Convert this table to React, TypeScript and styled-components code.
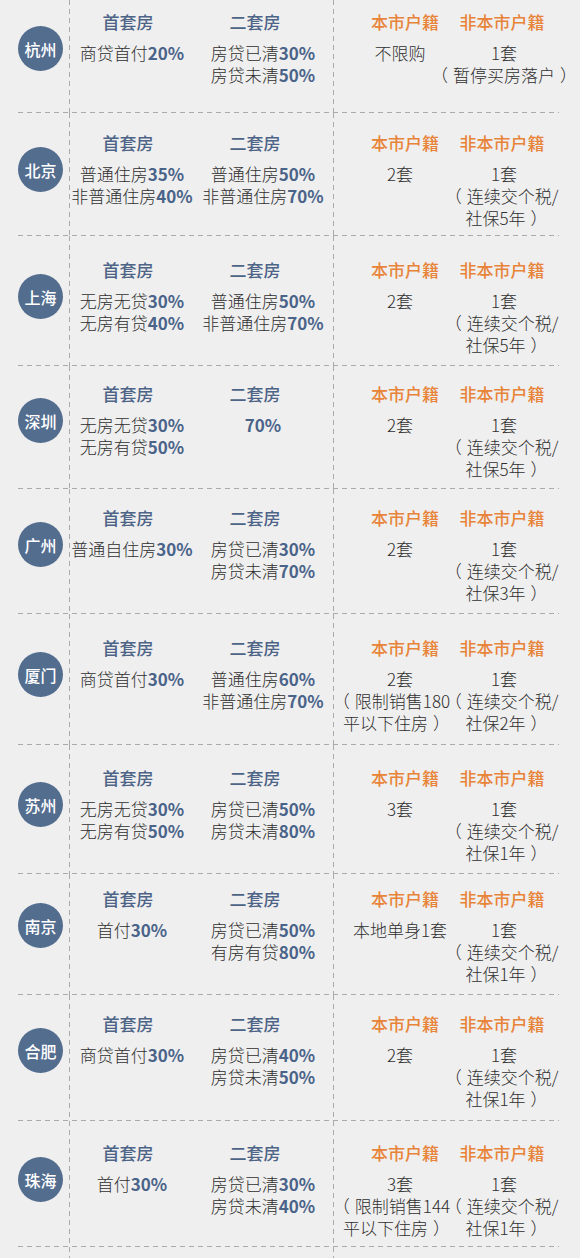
import React from "react";
import styled, { createGlobalStyle } from "styled-components";

const GlobalStyle = createGlobalStyle`
  html, body { margin: 0; padding: 0; background: #efefef; }
  body { font-family: "Noto Sans CJK SC", "Noto Sans", sans-serif; }
`;

const DASH = "#ababab";

type Seg = { t: string; n?: string };
type RowData = {
  city: string;
  h: number;
  top: number;
  c1: Seg[];
  c2: Seg[];
  c3: string[];
  c4: string[];
  noteDx?: number;
};

const rows: RowData[] = [
  { city: "杭州", h: 113, top: 22, c1: [{ t: "商贷首付", n: "20%" }], c2: [{ t: "房贷已清", n: "30%" }, { t: "房贷未清", n: "50%" }], c3: ["不限购"], c4: ["1套", "（暂停买房落户）"] },
  { city: "北京", h: 123, top: 30, c1: [{ t: "普通住房", n: "35%" }, { t: "非普通住房", n: "40%" }], c2: [{ t: "普通住房", n: "50%" }, { t: "非普通住房", n: "70%" }], c3: ["2套"], c4: ["1套", "（连续交个税/", "社保5年）"] },
  { city: "上海", h: 130, top: 34, c1: [{ t: "无房无贷", n: "30%" }, { t: "无房有贷", n: "40%" }], c2: [{ t: "普通住房", n: "50%" }, { t: "非普通住房", n: "70%" }], c3: ["2套"], c4: ["1套", "（连续交个税/", "社保5年）"] },
  { city: "深圳", h: 123, top: 28, c1: [{ t: "无房无贷", n: "30%" }, { t: "无房有贷", n: "50%" }], c2: [{ t: "", n: "70%" }], c3: ["2套"], c4: ["1套", "（连续交个税/", "社保5年）"] },
  { city: "广州", h: 125, top: 29, c1: [{ t: "普通自住房", n: "30%" }], c2: [{ t: "房贷已清", n: "30%" }, { t: "房贷未清", n: "70%" }], c3: ["2套"], c4: ["1套", "（连续交个税/", "社保3年）"] },
  { city: "厦门", h: 131, top: 34, c1: [{ t: "商贷首付", n: "30%" }], c2: [{ t: "普通住房", n: "60%" }, { t: "非普通住房", n: "70%" }], c3: ["2套", "（限制销售180", "平以下住房）"], c4: ["1套", "（连续交个税/", "社保2年）"], noteDx: -6 },
  { city: "苏州", h: 129, top: 33, c1: [{ t: "无房无贷", n: "30%" }, { t: "无房有贷", n: "50%" }], c2: [{ t: "房贷已清", n: "50%" }, { t: "房贷未清", n: "80%" }], c3: ["3套"], c4: ["1套", "（连续交个税/", "社保1年）"] },
  { city: "南京", h: 121, top: 25, c1: [{ t: "首付", n: "30%" }], c2: [{ t: "房贷已清", n: "50%" }, { t: "有房有贷", n: "80%" }], c3: ["本地单身1套"], c4: ["1套", "（连续交个税/", "社保1年）"] },
  { city: "合肥", h: 126, top: 29, c1: [{ t: "商贷首付", n: "30%" }], c2: [{ t: "房贷已清", n: "40%" }, { t: "房贷未清", n: "50%" }], c3: ["2套"], c4: ["1套", "（连续交个税/", "社保1年）"] },
  { city: "珠海", h: 126, top: 32, c1: [{ t: "首付", n: "30%" }], c2: [{ t: "房贷已清", n: "30%" }, { t: "房贷未清", n: "40%" }], c3: ["3套", "（限制销售144", "平以下住房）"], c4: ["1套", "（连续交个税/", "社保1年）"], noteDx: -6 },
];

const Page = styled.div`
  width: 580px;
  overflow: hidden;
`;

const Row = styled.div<{ $h: number; $line: boolean }>`
  box-sizing: border-box;
  display: grid;
  grid-template-columns: 51px 264px 226px;
  margin-left: 18px;
  width: 541px;
  height: ${(p) => p.$h}px;
  background-image: ${(p) =>
    p.$line ? `linear-gradient(to right, ${DASH} 0 5px, transparent 5px)` : "none"};
  background-size: 9px 1px;
  background-repeat: repeat-x;
  background-position: left bottom;
`;

const CityCell = styled.div<{ $top: number }>`
  display: flex;
  align-items: flex-start;
  padding-top: ${(p) => p.$top + 4}px;
`;

const Circle = styled.div`
  width: 45px;
  height: 45px;
  border-radius: 50%;
  background: #536d8f;
  color: #ffffff;
  font-size: 16px;
  font-weight: 500;
  display: flex;
  align-items: center;
  justify-content: center;
  letter-spacing: 0;
`;

const Section = styled.div<{ $top: number; $cols: string; $padLeft: number }>`
  box-sizing: border-box;
  display: grid;
  grid-template-columns: ${(p) => p.$cols};
  align-content: start;
  padding-top: ${(p) => p.$top - 10}px;
  padding-left: ${(p) => p.$padLeft}px;
  background-image: linear-gradient(to bottom, ${DASH} 0 5px, transparent 5px);
  background-size: 1px 9px;
  background-repeat: repeat-y;
  background-position: left top;
`;

const Col = styled.div`
  display: flex;
  flex-direction: column;
  align-items: center;
  min-width: 0;
`;

const Head = styled.div<{ $orange?: boolean; $shift: number }>`
  font-size: 17px;
  line-height: 20px;
  font-weight: 500;
  white-space: nowrap;
  color: ${(p) => (p.$orange ? "#e8843a" : "#4d6487")};
  margin-bottom: 10px;
  margin-left: ${(p) => (p.$shift > 0 ? p.$shift * 2 : 0)}px;
  margin-right: ${(p) => (p.$shift < 0 ? -p.$shift * 2 : 0)}px;
`;

const Line = styled.div<{ $dx?: number }>`
  font-size: 17px;
  line-height: 22px;
  font-weight: 300;
  color: #2f2f2f;
  white-space: nowrap;
  margin-left: ${(p) => ((p.$dx ?? 0) > 0 ? (p.$dx ?? 0) * 2 : 0)}px;
  margin-right: ${(p) => ((p.$dx ?? 0) < 0 ? -(p.$dx ?? 0) * 2 : 0)}px;
`;

/* Full-width brackets drawn centred in their em box, as in the reference */
const Paren = styled.span<{ $open: boolean }>`
  display: inline-block;
  margin-left: ${(p) => (p.$open ? -5 : 5)}px;
  margin-right: ${(p) => (p.$open ? 5 : -5)}px;
`;

const Num = styled.span`
  font-weight: 700;
  color: #4a6389;
`;

const withParens = (s: string) =>
  s.split(/([（）])/).filter(Boolean).map((part, i) =>
    part === "（" || part === "）" ? (
      <Paren key={i} $open={part === "（"}>
        {part}
      </Paren>
    ) : (
      <React.Fragment key={i}>{part}</React.Fragment>
    )
  );

const SegLines = ({ segs }: { segs: Seg[] }) => (
  <>
    {segs.map((s, i) => (
      <Line key={i}>
        {s.t}
        {s.n && <Num>{s.n}</Num>}
      </Line>
    ))}
  </>
);

const TextLines = ({ lines, noteDx }: { lines: string[]; noteDx?: number }) => (
  <>
    {lines.map((l, i) => (
      <Line key={i} $dx={i > 0 ? noteDx : 0}>
        {withParens(l)}
      </Line>
    ))}
  </>
);

export default function App() {
  return (
    <Page>
      <GlobalStyle />
      {rows.map((r) => (
        <Row key={r.city} $h={r.h} $line>
          <CityCell $top={r.top}>
            <Circle>{r.city}</Circle>
          </CityCell>
          <Section $top={r.top} $cols="126px 136px" $padLeft={0}>
            <Col>
              <Head $shift={-4}>首套房</Head>
              <SegLines segs={r.c1} />
            </Col>
            <Col>
              <Head $shift={-8}>二套房</Head>
              <SegLines segs={r.c2} />
            </Col>
          </Section>
          <Section $top={r.top} $cols="104px 104px" $padLeft={15}>
            <Col>
              <Head $orange $shift={5}>本市户籍</Head>
              <TextLines lines={r.c3} noteDx={r.noteDx} />
            </Col>
            <Col>
              <Head $orange $shift={-2}>非本市户籍</Head>
              <TextLines lines={r.c4} />
            </Col>
          </Section>
        </Row>
      ))}
      <Row $h={11} $line={false}>
        <CityCell $top={0} />
        <Section $top={10} $cols="1fr" $padLeft={0} />
        <Section $top={10} $cols="1fr" $padLeft={0} />
      </Row>
    </Page>
  );
}
